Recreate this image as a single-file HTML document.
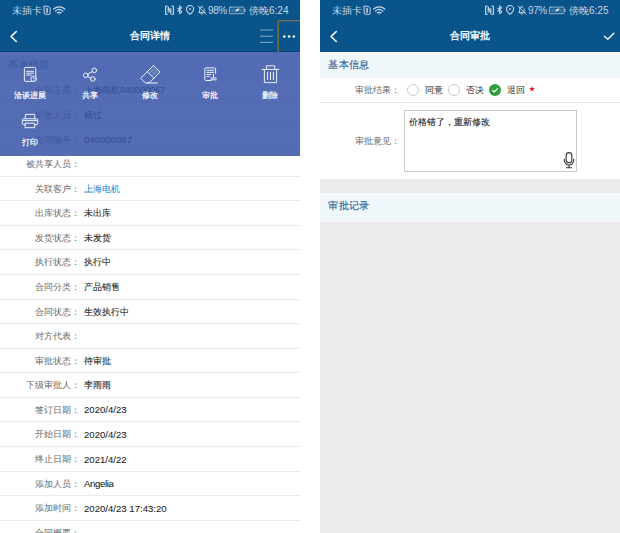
<!DOCTYPE html>
<html><head><meta charset="utf-8">
<style>
*{margin:0;padding:0;box-sizing:border-box;}
html,body{width:620px;height:533px;overflow:hidden;background:#fff;font-family:"Liberation Sans",sans-serif;}
.ph{position:absolute;top:0;width:300px;height:533px;overflow:hidden;background:#fff;}
#L{left:0;}
#R{left:320px;background:#ebebeb;}
.bar{position:absolute;left:0;top:0;width:300px;height:52px;background:#09548a;border-bottom:1px solid #064878;}
.st{position:absolute;top:5px;font-size:10px;line-height:12px;color:#c6d4e2;white-space:nowrap;}
.pct{top:4.6px;font-size:10px;letter-spacing:-0.4px;}
.title{position:absolute;top:29.2px;left:0;width:300px;text-align:center;font-size:10.3px;line-height:13px;color:#fff;-webkit-text-stroke:0.35px #fff;}
.sec{position:absolute;left:0;width:300px;height:26px;background:#eff7fb;color:#2a6193;font-size:10.4px;line-height:25px;padding-left:8px;-webkit-text-stroke:0.15px #2a6193;}
.row{position:absolute;left:0;width:300px;height:24.57px;border-bottom:1px solid #ebebeb;font-size:9px;}
.lb{position:absolute;right:220px;top:0;line-height:24px;color:#686868;white-space:nowrap;}
.vl{position:absolute;left:84px;top:0;line-height:24px;color:#1e1e1e;white-space:nowrap;-webkit-text-stroke:0.08px;}
.num{font-size:9.6px;top:0.6px;}
.ov{position:absolute;left:0;top:52px;width:300px;height:104px;background:rgba(56,84,168,0.86);}
.ml{position:absolute;width:60px;text-align:center;color:#fff;font-size:8px;line-height:10px;white-space:nowrap;-webkit-text-stroke:0.2px #fff;}
.ico{position:absolute;left:0;top:0;}
.wrow{position:absolute;left:0;width:300px;background:#fff;font-size:9px;}
.rad{position:absolute;top:6px;width:12px;height:12px;border-radius:50%;border:1px solid #cdcdcd;background:#fff;}
.rad.on{border:none;background:#2f9e3f;}
.rad svg{position:absolute;left:0;top:0;}
.rt{position:absolute;top:0;line-height:24px;color:#303030;white-space:nowrap;}
.ta{position:absolute;left:84px;top:7.4px;width:173px;height:62.3px;border:1px solid #c9c9c9;font-size:9px;color:#1e1e1e;-webkit-text-stroke:0.1px;padding:6px 0 0 4px;line-height:11px;}
.mic{position:absolute;left:158.4px;top:41px;}
i{font-style:normal;display:inline-block;width:1em;text-align:center;}
</style></head><body>

<div class="ph" id="L">
  <div class="bar"></div>
  <div class="st" style="left:12px;"><i>未</i><i>插</i><i>卡</i></div>
  <div class="st pct" style="left:208px;">98%</div>
  <div class="st" style="left:249px;"><i>傍</i><i>晚</i>6:24</div>
  <div class="title"><i>合</i><i>同</i><i>详</i><i>情</i></div>
  <svg class="ico" width="300" height="52" viewBox="0 0 300 52" fill="none" stroke="#c6d4e2" stroke-width="1" stroke-linecap="round" stroke-linejoin="round">
    <path d="M44.2 6.2H48.3L50.2 8.1V13.4Q50.2 14.3 49.3 14.3H45.1Q44.2 14.3 44.2 13.4Z"/>
    <path d="M46.3 8V12.5M47.6 8.5V12.5" stroke-width="0.9"/>
    <path d="M53.6 9A8.6 8.6 0 0 1 64.8 9M55.5 11A5.8 5.8 0 0 1 62.9 11M57.3 12.8A3 3 0 0 1 61.1 12.8" stroke-width="1.2"/>
    <circle cx="59.2" cy="14" r="0.7" fill="#c6d4e2" stroke="none"/>
    <path d="M167.2 6.1H166.2Q165.6 6.1 165.6 6.8V13.7Q165.6 14.3 166.2 14.3H167.2M171.8 6.1H172.9Q173.5 6.1 173.5 6.8V13.7Q173.5 14.3 172.9 14.3H171.8" stroke-width="1.2"/>
    <path d="M168.2 12.2V6.8L170.9 13.6V8.2" stroke-width="1.1"/>
    <path d="M177.6 8.2L181.8 11.8L179.7 13.8V5.8L181.8 7.8L177.6 11.4" stroke-width="1.05"/>
    <path d="M190 14.4Q186.4 11.2 186.4 9.2A3.6 3.6 0 0 1 193.6 9.2Q193.6 11.2 190 14.4Z" stroke-width="1.05"/>
    <circle cx="190" cy="9" r="0.9" fill="#c6d4e2" stroke="none"/>
    <path d="M199.6 11.6V9.6A2.2 2.2 0 0 1 202.6 7.1M204.2 8.9V11.6L205.2 12.6H198.6L199.6 11.6M200.9 13.9H202.7M198.2 6.1L205.8 14.1M201.9 6.2V6.9" stroke-width="0.95"/>
    <rect x="229.4" y="7.1" width="14.6" height="6.6" rx="0.8" stroke-opacity="0.75"/>
    <rect x="230.8" y="8.5" width="11.8" height="3.8" fill="#c6d4e2" fill-opacity="0.25" stroke="none"/>
    <path d="M245 9.3V11.5" stroke-width="1.1" stroke-opacity="0.75"/>
    <path d="M235.4 11.6Q236 8.6 239.4 8.6Q238.8 11.4 235.4 11.6Z" fill="#e8eef5" stroke="none"/>
  </svg>
  <svg class="ico" width="300" height="52" viewBox="0 0 300 52" fill="none" stroke="#fff" stroke-linecap="round" stroke-linejoin="round">
    <path d="M16.2 31.6L11 36.5L16.2 41.4" stroke-width="1.5"/>
    <path d="M260 30H273M260 36.2H273M260 42.4H273" stroke="#86a8c8" stroke-width="1" stroke-linecap="butt"/>
    <path d="M278.2 52V20.7H301" stroke="#8e7d3e" stroke-width="1.1" stroke-linecap="butt"/>
    <circle cx="284.3" cy="36.4" r="1.25" fill="#fff" stroke="none"/>
    <circle cx="289.1" cy="36.4" r="1.25" fill="#fff" stroke="none"/>
    <circle cx="293.8" cy="36.4" r="1.25" fill="#fff" stroke="none"/>
  </svg>

  <div class="sec" style="top:52px;-webkit-text-stroke:0;color:#3a6a90;"><i>基</i><i>本</i><i>信</i><i>息</i></div>
  <div class="row" style="top:78.40px;"><div class="lb"><i>合</i><i>同</i><i>主</i><i>题</i><i>：</i></div><div class="vl"><i>上</i><i>海</i><i>电</i><i>机</i>040000067</div></div>
  <div class="row" style="top:102.97px;"><div class="lb"><i>销</i><i>售</i><i>人</i><i>员</i><i>：</i></div><div class="vl"><i>杨</i><i>过</i></div></div>
  <div class="row" style="top:127.54px;"><div class="lb"><i>合</i><i>同</i><i>编</i><i>号</i><i>：</i></div><div class="vl num">040000067</div></div>
  <div class="row" style="top:152.11px;"><div class="lb"><i>被</i><i>共</i><i>享</i><i>人</i><i>员</i><i>：</i></div><div class="vl"></div></div>
  <div class="row" style="top:176.68px;"><div class="lb"><i>关</i><i>联</i><i>客</i><i>户</i><i>：</i></div><div class="vl" style="color:#2a8ad6"><i>上</i><i>海</i><i>电</i><i>机</i></div></div>
  <div class="row" style="top:201.25px;"><div class="lb"><i>出</i><i>库</i><i>状</i><i>态</i><i>：</i></div><div class="vl"><i>未</i><i>出</i><i>库</i></div></div>
  <div class="row" style="top:225.82px;"><div class="lb"><i>发</i><i>货</i><i>状</i><i>态</i><i>：</i></div><div class="vl"><i>未</i><i>发</i><i>货</i></div></div>
  <div class="row" style="top:250.39px;"><div class="lb"><i>执</i><i>行</i><i>状</i><i>态</i><i>：</i></div><div class="vl"><i>执</i><i>行</i><i>中</i></div></div>
  <div class="row" style="top:274.96px;"><div class="lb"><i>合</i><i>同</i><i>分</i><i>类</i><i>：</i></div><div class="vl"><i>产</i><i>品</i><i>销</i><i>售</i></div></div>
  <div class="row" style="top:299.53px;"><div class="lb"><i>合</i><i>同</i><i>状</i><i>态</i><i>：</i></div><div class="vl"><i>生</i><i>效</i><i>执</i><i>行</i><i>中</i></div></div>
  <div class="row" style="top:324.10px;"><div class="lb"><i>对</i><i>方</i><i>代</i><i>表</i><i>：</i></div><div class="vl"></div></div>
  <div class="row" style="top:348.67px;"><div class="lb"><i>审</i><i>批</i><i>状</i><i>态</i><i>：</i></div><div class="vl"><i>待</i><i>审</i><i>批</i></div></div>
  <div class="row" style="top:373.24px;"><div class="lb"><i>下</i><i>级</i><i>审</i><i>批</i><i>人</i><i>：</i></div><div class="vl"><i>李</i><i>雨</i><i>雨</i></div></div>
  <div class="row" style="top:397.81px;"><div class="lb"><i>签</i><i>订</i><i>日</i><i>期</i><i>：</i></div><div class="vl num">2020/4/23</div></div>
  <div class="row" style="top:422.38px;"><div class="lb"><i>开</i><i>始</i><i>日</i><i>期</i><i>：</i></div><div class="vl num">2020/4/23</div></div>
  <div class="row" style="top:446.95px;"><div class="lb"><i>终</i><i>止</i><i>日</i><i>期</i><i>：</i></div><div class="vl num">2021/4/22</div></div>
  <div class="row" style="top:471.52px;"><div class="lb"><i>添</i><i>加</i><i>人</i><i>员</i><i>：</i></div><div class="vl num" style="letter-spacing:-0.35px">Angelia</div></div>
  <div class="row" style="top:496.09px;"><div class="lb"><i>添</i><i>加</i><i>时</i><i>间</i><i>：</i></div><div class="vl num">2020/4/23 17:43:20</div></div>
  <div class="row" style="top:520.66px;"><div class="lb"><i>合</i><i>同</i><i>概</i><i>要</i><i>：</i></div><div class="vl"></div></div>

  <div class="ov"></div>
  <svg class="ico" width="300" height="160" viewBox="0 0 300 160" fill="none" stroke="#eef1fa" stroke-width="1" stroke-linecap="round" stroke-linejoin="round">
    <!-- doc with clock -->
    <rect x="24.4" y="67.4" width="11.4" height="14" rx="1.3"/>
    <path d="M26.6 71.3H33.6M26.6 73.2H33.6M26.6 75.1H31"/>
    <circle cx="33.6" cy="78.7" r="2.7" fill="#546cb4"/>
    <path d="M33.6 77.3V78.8H34.8" stroke-width="0.8"/>
    <!-- share -->
    <circle cx="94.3" cy="70.4" r="2.3"/>
    <circle cx="85.8" cy="75.3" r="2.3"/>
    <circle cx="92.8" cy="79" r="2.3"/>
    <path d="M87.8 74.1L92.3 71.6M87.8 76.5L90.8 78"/>
    <!-- eraser -->
    <path d="M153.5 65.6L160 72.1L150.6 81.5Q149 83 147.4 83L145.4 83L140.6 78.2L153.5 65.6Z"/>
    <path d="M147.3 71.6L153.8 78.1M147.4 83H157.4"/>
    <path d="M150 69.5L155.5 75M152 67.8L157.5 73.3M149.4 73.7L155.6 67.7M151.6 75.9L157.8 69.9" stroke-width="0.5" opacity="0.6"/>
    <!-- approve -->
    <path d="M211 80.5H205.8Q204.8 80.5 204.8 79.5V68.9Q204.8 67.9 205.8 67.9H214.6Q215.6 67.9 215.6 68.9V73.5"/>
    <path d="M206.9 70.3H213.6M206.9 72.4H213.6M206.9 74.5H211M206.9 76.6H209"/>
    <path d="M213.5 74.3V77.8M210.8 78H216.2M210.8 79.8H216.4" stroke-width="1"/>
    <!-- trash -->
    <path d="M262 69.4H279M266.4 69.4V65.8H274.8V69.4M264.4 69.4V82.6H276.6V69.4M267.6 72.2V79.6M270.5 72.2V79.6M273.4 72.2V79.6"/>
    <!-- printer -->
    <path d="M25.3 118.8V114.4H34.8V118.8"/>
    <path d="M25.3 124.6H23.3Q22.4 124.6 22.4 123.7V119.8Q22.4 118.8 23.3 118.8H36.8Q37.7 118.8 37.7 119.8V123.7Q37.7 124.6 36.8 124.6H34.8"/>
    <path d="M23.5 120.6H36.6"/>
    <rect x="25.4" y="123.2" width="9.3" height="4.5"/>
  </svg>
  <div class="ml" style="left:0;top:91px;"><i>洽</i><i>谈</i><i>进</i><i>展</i></div>
  <div class="ml" style="left:60px;top:91px;"><i>共</i><i>享</i></div>
  <div class="ml" style="left:120px;top:91px;"><i>修</i><i>改</i></div>
  <div class="ml" style="left:180px;top:91px;"><i>审</i><i>批</i></div>
  <div class="ml" style="left:240px;top:91px;"><i>删</i><i>除</i></div>
  <div class="ml" style="left:0;top:138px;"><i>打</i><i>印</i></div>
</div>

<div class="ph" id="R">
  <div class="bar"></div>
  <div class="st" style="left:12px;"><i>未</i><i>插</i><i>卡</i></div>
  <div class="st pct" style="left:208px;">97%</div>
  <div class="st" style="left:249px;"><i>傍</i><i>晚</i>6:25</div>
  <div class="title"><i>合</i><i>同</i><i>审</i><i>批</i></div>
  <svg class="ico" width="300" height="52" viewBox="0 0 300 52" fill="none" stroke="#c6d4e2" stroke-width="1" stroke-linecap="round" stroke-linejoin="round">
    <path d="M44.2 6.2H48.3L50.2 8.1V13.4Q50.2 14.3 49.3 14.3H45.1Q44.2 14.3 44.2 13.4Z"/>
    <path d="M46.3 8V12.5M47.6 8.5V12.5" stroke-width="0.9"/>
    <path d="M53.6 9A8.6 8.6 0 0 1 64.8 9M55.5 11A5.8 5.8 0 0 1 62.9 11M57.3 12.8A3 3 0 0 1 61.1 12.8" stroke-width="1.2"/>
    <circle cx="59.2" cy="14" r="0.7" fill="#c6d4e2" stroke="none"/>
    <path d="M167.2 6.1H166.2Q165.6 6.1 165.6 6.8V13.7Q165.6 14.3 166.2 14.3H167.2M171.8 6.1H172.9Q173.5 6.1 173.5 6.8V13.7Q173.5 14.3 172.9 14.3H171.8" stroke-width="1.2"/>
    <path d="M168.2 12.2V6.8L170.9 13.6V8.2" stroke-width="1.1"/>
    <path d="M177.6 8.2L181.8 11.8L179.7 13.8V5.8L181.8 7.8L177.6 11.4" stroke-width="1.05"/>
    <path d="M190 14.4Q186.4 11.2 186.4 9.2A3.6 3.6 0 0 1 193.6 9.2Q193.6 11.2 190 14.4Z" stroke-width="1.05"/>
    <circle cx="190" cy="9" r="0.9" fill="#c6d4e2" stroke="none"/>
    <path d="M199.6 11.6V9.6A2.2 2.2 0 0 1 202.6 7.1M204.2 8.9V11.6L205.2 12.6H198.6L199.6 11.6M200.9 13.9H202.7M198.2 6.1L205.8 14.1M201.9 6.2V6.9" stroke-width="0.95"/>
    <rect x="229.4" y="7.1" width="14.6" height="6.6" rx="0.8" stroke-opacity="0.75"/>
    <rect x="230.8" y="8.5" width="11.8" height="3.8" fill="#c6d4e2" fill-opacity="0.25" stroke="none"/>
    <path d="M245 9.3V11.5" stroke-width="1.1" stroke-opacity="0.75"/>
    <path d="M235.4 11.6Q236 8.6 239.4 8.6Q238.8 11.4 235.4 11.6Z" fill="#e8eef5" stroke="none"/>
  </svg>
  <svg class="ico" width="300" height="52" viewBox="0 0 300 52" fill="none" stroke="#fff" stroke-linecap="round" stroke-linejoin="round">
    <path d="M16.2 31.6L11 36.5L16.2 41.4" stroke-width="1.5"/>
    <path d="M284.4 36.3L287.8 39.2L293.9 33.3" stroke-width="1.3"/>
  </svg>
  <div class="sec" style="top:52px;height:26px;border-top:1.5px solid #fff;line-height:23.6px;"><i>基</i><i>本</i><i>信</i><i>息</i></div>
  <div class="wrow" style="top:78px;height:24.6px;border-bottom:1px solid #e6e6e6;">
    <div class="lb" style="line-height:24px;right:220px;"><i>审</i><i>批</i><i>结</i><i>果</i><i>：</i></div>
    <div class="rad" style="left:87px;"></div><div class="rt" style="left:104.5px;"><i>同</i><i>意</i></div>
    <div class="rad" style="left:128px;"></div><div class="rt" style="left:145.7px;"><i>否</i><i>决</i></div>
    <div class="rad on" style="left:169px;"><svg width="12" height="12" viewBox="0 0 12 12"><path d="M3.3 6.2 L5.2 8 L8.8 4.3" fill="none" stroke="#fff" stroke-width="1.2"/></svg></div><div class="rt" style="left:186.5px;"><i>退</i><i>回</i></div>
    <svg style="position:absolute;left:208.5px;top:8.3px;" width="6" height="6" viewBox="0 0 5.6 5.6"><polygon points="2.80,0.10 3.48,1.87 5.37,1.97 3.89,3.16 4.39,4.98 2.80,3.95 1.21,4.98 1.71,3.16 0.23,1.97 2.12,1.87" fill="#e8141c"/></svg>
  </div>
  <div class="wrow" style="top:102.6px;height:76.4px;">
    <div class="lb" style="top:26px;line-height:24px;right:220px;"><i>审</i><i>批</i><i>意</i><i>见</i><i>：</i></div>
    <div class="ta"><i>价</i><i>格</i><i>错</i><i>了</i><i>，</i><i>重</i><i>新</i><i>修</i><i>改</i>
      <svg class="mic" width="12" height="17" viewBox="0 0 12 17"><rect x="3.2" y="0.6" width="5.6" height="10.2" rx="2.8" fill="none" stroke="#333" stroke-width="1.1"/><path d="M1.3 6.8 V8.3 A4.7 4.7 0 0 0 10.7 8.3 V6.8" fill="none" stroke="#333" stroke-width="1.1"/><path d="M6 13.2 V15.6 M3.2 15.8 H8.8" stroke="#333" stroke-width="1.1"/></svg>
    </div>
  </div>
  <div class="sec" style="top:192.6px;height:29.8px;line-height:26.5px;"><i>审</i><i>批</i><i>记</i><i>录</i></div>
</div>

</body></html>
